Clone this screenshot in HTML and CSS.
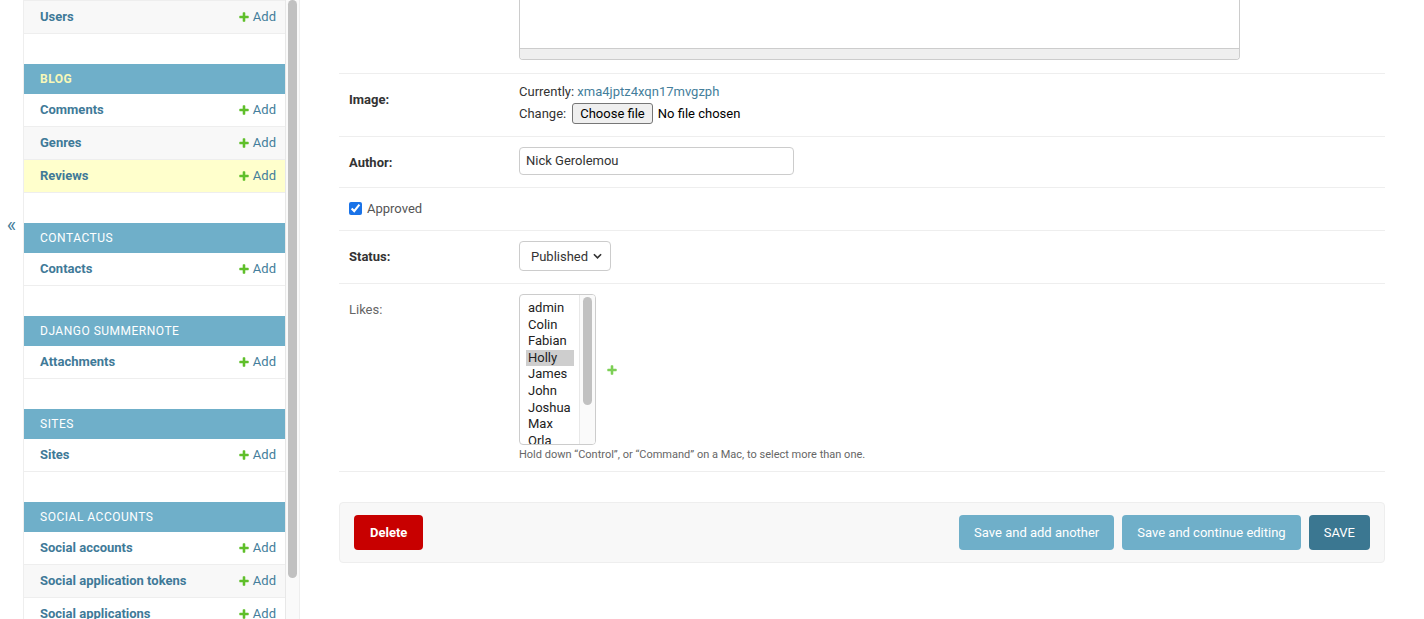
FILE: index.html
```html
<!DOCTYPE html>
<html lang="en">
<head>
<meta charset="utf-8">
<title>Change review | Django site admin</title>
<link rel="stylesheet" href="styles.css">
</head>
<body>
<div class="page">
  <div class="toggle-col"><button class="toggle" type="button" aria-label="Toggle navigation">&laquo;</button></div>

  <nav class="sidebar">
    <div class="sidebar-content">
      <div class="module">
        <div class="row row-alt row-first"><a class="model" href="#">Users</a><a class="add" href="#"><svg class="plus" viewBox="0 0 1792 1792"><path d="M1600 796v192q0 40-28 68t-68 28h-416v416q0 40-28 68t-68 28h-192q-40 0-68-28t-28-68v-416h-416q-40 0-68-28t-28-68v-192q0-40 28-68t68-28h416v-416q0-40 28-68t68-28h192q40 0 68 28t28 68v416h416q40 0 68 28t28 68z"/></svg>Add</a></div>
      </div>

      <div class="module">
        <div class="caption current">Blog</div>
        <div class="row"><a class="model" href="#">Comments</a><a class="add" href="#"><svg class="plus" viewBox="0 0 1792 1792"><path d="M1600 796v192q0 40-28 68t-68 28h-416v416q0 40-28 68t-68 28h-192q-40 0-68-28t-28-68v-416h-416q-40 0-68-28t-28-68v-192q0-40 28-68t68-28h416v-416q0-40 28-68t68-28h192q40 0 68 28t28 68v416h416q40 0 68 28t28 68z"/></svg>Add</a></div>
        <div class="row row-alt"><a class="model" href="#">Genres</a><a class="add" href="#"><svg class="plus" viewBox="0 0 1792 1792"><path d="M1600 796v192q0 40-28 68t-68 28h-416v416q0 40-28 68t-68 28h-192q-40 0-68-28t-28-68v-416h-416q-40 0-68-28t-28-68v-192q0-40 28-68t68-28h416v-416q0-40 28-68t68-28h192q40 0 68 28t28 68v416h416q40 0 68 28t28 68z"/></svg>Add</a></div>
        <div class="row row-selected"><a class="model" href="#">Reviews</a><a class="add" href="#"><svg class="plus" viewBox="0 0 1792 1792"><path d="M1600 796v192q0 40-28 68t-68 28h-416v416q0 40-28 68t-68 28h-192q-40 0-68-28t-28-68v-416h-416q-40 0-68-28t-28-68v-192q0-40 28-68t68-28h416v-416q0-40 28-68t68-28h192q40 0 68 28t28 68v416h416q40 0 68 28t28 68z"/></svg>Add</a></div>
      </div>

      <div class="module">
        <div class="caption">Contactus</div>
        <div class="row"><a class="model" href="#">Contacts</a><a class="add" href="#"><svg class="plus" viewBox="0 0 1792 1792"><path d="M1600 796v192q0 40-28 68t-68 28h-416v416q0 40-28 68t-68 28h-192q-40 0-68-28t-28-68v-416h-416q-40 0-68-28t-28-68v-192q0-40 28-68t68-28h416v-416q0-40 28-68t68-28h192q40 0 68 28t28 68v416h416q40 0 68 28t28 68z"/></svg>Add</a></div>
      </div>

      <div class="module">
        <div class="caption">Django Summernote</div>
        <div class="row"><a class="model" href="#">Attachments</a><a class="add" href="#"><svg class="plus" viewBox="0 0 1792 1792"><path d="M1600 796v192q0 40-28 68t-68 28h-416v416q0 40-28 68t-68 28h-192q-40 0-68-28t-28-68v-416h-416q-40 0-68-28t-28-68v-192q0-40 28-68t68-28h416v-416q0-40 28-68t68-28h192q40 0 68 28t28 68v416h416q40 0 68 28t28 68z"/></svg>Add</a></div>
      </div>

      <div class="module">
        <div class="caption">Sites</div>
        <div class="row"><a class="model" href="#">Sites</a><a class="add" href="#"><svg class="plus" viewBox="0 0 1792 1792"><path d="M1600 796v192q0 40-28 68t-68 28h-416v416q0 40-28 68t-68 28h-192q-40 0-68-28t-28-68v-416h-416q-40 0-68-28t-28-68v-192q0-40 28-68t68-28h416v-416q0-40 28-68t68-28h192q40 0 68 28t28 68v416h416q40 0 68 28t28 68z"/></svg>Add</a></div>
      </div>

      <div class="module">
        <div class="caption">Social Accounts</div>
        <div class="row"><a class="model" href="#">Social accounts</a><a class="add" href="#"><svg class="plus" viewBox="0 0 1792 1792"><path d="M1600 796v192q0 40-28 68t-68 28h-416v416q0 40-28 68t-68 28h-192q-40 0-68-28t-28-68v-416h-416q-40 0-68-28t-28-68v-192q0-40 28-68t68-28h416v-416q0-40 28-68t68-28h192q40 0 68 28t28 68v416h416q40 0 68 28t28 68z"/></svg>Add</a></div>
        <div class="row row-alt"><a class="model" href="#">Social application tokens</a><a class="add" href="#"><svg class="plus" viewBox="0 0 1792 1792"><path d="M1600 796v192q0 40-28 68t-68 28h-416v416q0 40-28 68t-68 28h-192q-40 0-68-28t-28-68v-416h-416q-40 0-68-28t-28-68v-192q0-40 28-68t68-28h416v-416q0-40 28-68t68-28h192q40 0 68 28t28 68v416h416q40 0 68 28t28 68z"/></svg>Add</a></div>
        <div class="row"><a class="model" href="#">Social applications</a><a class="add" href="#"><svg class="plus" viewBox="0 0 1792 1792"><path d="M1600 796v192q0 40-28 68t-68 28h-416v416q0 40-28 68t-68 28h-192q-40 0-68-28t-28-68v-416h-416q-40 0-68-28t-28-68v-192q0-40 28-68t68-28h416v-416q0-40 28-68t68-28h192q40 0 68 28t28 68v416h416q40 0 68 28t28 68z"/></svg>Add</a></div>
      </div>
    </div>
    <div class="scroll-track"><div class="scroll-thumb"></div></div>
  </nav>

  <main class="main">
    <div class="fieldset">
      <div class="form-row row-editor">
        <div class="label"></div>
        <div class="editor-tail"><div class="editor-status"></div></div>
      </div>

      <div class="form-row">
        <div class="label required label-image">Image:</div>
        <div class="file-upload">
          <div class="file-line">Currently: <a class="link" href="#">xma4jptz4xqn17mvgzph</a></div>
          <div class="file-line file-change">Change: <span class="file-btn">Choose file</span><span class="file-none">No file chosen</span></div>
        </div>
      </div>

      <div class="form-row">
        <div class="label required">Author:</div>
        <div class="text-input">Nick Gerolemou</div>
      </div>

      <div class="form-row">
        <div class="checkbox-line"><input class="checkbox" type="checkbox" id="approved" checked><label class="checkbox-label" for="approved">Approved</label></div>
      </div>

      <div class="form-row">
        <div class="label required">Status:</div>
        <div class="select-box">Published<svg class="chevron" viewBox="0 0 10 6"><path d="M1 1l4 4 4-4"/></svg></div>
      </div>

      <div class="form-row row-likes">
        <div class="label">Likes:</div>
        <div class="field-col">
          <div class="related-wrapper">
            <div class="listbox">
              <div class="options">
                <div class="option">admin</div>
                <div class="option">Colin</div>
                <div class="option">Fabian</div>
                <div class="option option-selected">Holly</div>
                <div class="option">James</div>
                <div class="option">John</div>
                <div class="option">Joshua</div>
                <div class="option">Max</div>
                <div class="option">Orla</div>
              </div>
              <div class="list-track"><div class="list-thumb"></div></div>
            </div>
            <a class="related-add" href="#"><svg class="plus plus-light" viewBox="0 0 1792 1792"><path d="M1600 796v192q0 40-28 68t-68 28h-416v416q0 40-28 68t-68 28h-192q-40 0-68-28t-28-68v-416h-416q-40 0-68-28t-28-68v-192q0-40 28-68t68-28h416v-416q0-40 28-68t68-28h192q40 0 68 28t28 68v416h416q40 0 68 28t28 68z"/></svg></a>
          </div>
          <div class="help">Hold down “Control”, or “Command” on a Mac, to select more than one.</div>
        </div>
      </div>
    </div>

    <div class="submit-row">
      <a class="btn btn-delete" href="#">Delete</a>
      <div class="save-group">
        <button class="btn btn-primary" type="button">Save and add another</button>
        <button class="btn btn-primary" type="button">Save and continue editing</button>
        <button class="btn btn-default" type="button">SAVE</button>
      </div>
    </div>
  </main>
</div>
</body>
</html>
```

FILE: styles.css
```css
* { box-sizing: border-box; }

html, body {
  margin: 0;
  padding: 0;
  height: 100%;
  background: #fff;
  font-family: "Roboto", "Liberation Sans", Arial, sans-serif;
  color: #333;
  font-size: 13px;
}

a { text-decoration: none; }

.page {
  display: flex;
  height: 100vh;
  overflow: hidden;
}

/* toggle */
.toggle-col {
  flex: 0 0 24px;
  width: 24px;
  border-right: 1px solid #eee;
}

.toggle {
  display: block;
  width: 23px;
  margin: 0;
  padding: 213px 0 0;
  border: 0;
  background: transparent;
  color: #447e9b;
  font-family: "Roboto", "Liberation Sans", sans-serif;
  font-size: 20px;
  line-height: 24px;
  text-align: center;
  cursor: pointer;
}

/* sidebar */
.sidebar {
  flex: 0 0 276px;
  width: 276px;
  height: 100vh;
  display: flex;
  overflow: hidden;
  border-right: 1px solid #eee;
}

.sidebar-content {
  flex: 0 0 261px;
  width: 261px;
  overflow: hidden;
}

.scroll-track {
  flex: 0 0 14px;
  width: 14px;
  height: 100%;
  background: #fafafa;
  border-left: 1px solid #e8e8e8;
  padding: 0 2px 0 2px;
}

.scroll-thumb {
  height: 578px;
  background: #c1c1c1;
  border-radius: 5px;
}

.module { margin-bottom: 30px; }

.caption {
  background: #6fafc9;
  color: #fff;
  font-size: 12px;
  line-height: 14px;
  letter-spacing: 0.5px;
  text-transform: uppercase;
  padding: 8px 16px;
}

.caption.current {
  color: #f8f8b8;
  font-weight: 700;
}

.row {
  display: flex;
  justify-content: space-between;
  align-items: center;
  padding: 8px 9px 8px 16px;
  line-height: 16px;
  border-bottom: 1px solid #eee;
  background: #fff;
  white-space: nowrap;
}

.row-first { border-top: 1px solid #eee; }
.row-alt { background: #f8f8f8; }
.row-selected { background: #ffffcc; }

.model {
  color: #3f7a98;
  font-weight: 700;
  font-size: 13px;
}

.add {
  display: inline-flex;
  align-items: center;
  gap: 3px;
  color: #447e9b;
  font-size: 13px;
}

.plus {
  width: 12px;
  height: 12px;
  fill: #5fbf2a;
}

.plus-light { fill: #7ccf55; }

/* main */
.main {
  flex: 1 1 auto;
  padding: 0 39px;
  min-width: 0;
}

.form-row {
  display: flex;
  align-items: flex-start;
  padding: 10px 10px 12px;
  border-bottom: 1px solid #eee;
}

.row-editor { padding-top: 0; padding-bottom: 13px; }
.row-likes { padding-bottom: 10px; }

.label {
  flex: 0 0 170px;
  width: 170px;
  padding: 8px 10px 0 0;
  line-height: 16px;
  color: #666;
  font-size: 13px;
}

.label.required {
  color: #333;
  font-weight: 700;
}

.editor-tail {
  width: 721px;
  height: 60px;
  border: 1px solid #ccc;
  border-top: 0;
  border-radius: 0 0 4px 4px;
  display: flex;
  flex-direction: column;
  justify-content: flex-end;
}

.editor-status {
  height: 11px;
  border-top: 1px solid #ccc;
  background: #efefef;
  border-radius: 0 0 3px 3px;
}

.file-upload { line-height: 16px; }

.file-line { color: #333; }

.link { color: #447e9b; }

.file-change {
  display: flex;
  align-items: center;
  margin-top: 3px;
  height: 21px;
}

.file-btn {
  display: inline-block;
  height: 21px;
  line-height: 19px;
  margin-left: 6px;
  padding: 0 7px;
  border: 1px solid #767676;
  border-radius: 3px;
  background: #efefef;
  color: #000;
  font-size: 13px;
}

.file-none {
  margin-left: 5px;
  color: #000;
}

.text-input {
  width: 275px;
  height: 28px;
  padding: 0 6px;
  line-height: 26px;
  border: 1px solid #ccc;
  border-radius: 4px;
  color: #333;
  font-size: 13px;
}

.checkbox-line {
  display: flex;
  align-items: center;
  height: 20px;
}

.checkbox {
  width: 13px;
  height: 13px;
  margin: 0;
  accent-color: #1a73e8;
}

.checkbox-label {
  margin-left: 5px;
  color: #555;
  font-size: 13px;
}

.select-box {
  display: flex;
  align-items: center;
  justify-content: space-between;
  width: 92px;
  height: 30px;
  padding: 0 8px 0 11px;
  border: 1px solid #ccc;
  border-radius: 4px;
  color: #333;
  font-size: 13px;
}

.chevron {
  width: 9px;
  height: 6px;
  fill: none;
  stroke: #333;
  stroke-width: 1.8;
}

.field-col { display: flex; flex-direction: column; }

.related-wrapper {
  display: flex;
  align-items: center;
}

.listbox {
  display: flex;
  width: 77px;
  height: 151px;
  border: 1px solid #ccc;
  border-radius: 4px;
  overflow: hidden;
  font-size: 13px;
  color: #222;
}

.options {
  flex: 1 1 auto;
  padding: 5px 5px 0 6px;
  overflow: hidden;
}

.list-track {
  flex: 0 0 16px;
  width: 16px;
  height: 100%;
  background: #fafafa;
  border-left: 1px solid #e8e8e8;
  padding: 2px 3px 0 3px;
}

.list-thumb {
  height: 108px;
  background: #c1c1c1;
  border-radius: 5px;
}

.option {
  line-height: 16.6px;
  padding: 0 2px;
  white-space: nowrap;
}

.option-selected { background: #cecece; }

.related-add {
  display: inline-flex;
  margin-left: 10px;
}

.help {
  margin-top: 3px;
  font-size: 11px;
  line-height: 13px;
  color: #666;
}

.submit-row {
  display: flex;
  align-items: center;
  margin-top: 30px;
  padding: 12px 14px;
  background: #f8f8f8;
  border: 1px solid #eee;
  border-radius: 4px;
}

.save-group {
  display: flex;
  gap: 8px;
  margin-left: auto;
}

.btn {
  display: inline-block;
  height: 35px;
  padding: 0 15px;
  line-height: 35px;
  border: 0;
  border-radius: 4px;
  color: #fff;
  font-family: "Roboto", "Liberation Sans", sans-serif;
  font-size: 13px;
  cursor: pointer;
}

.btn-delete {
  background: #c80000;
  font-weight: 700;
  padding: 0 16px;
}

.btn-primary { background: #6fafc9; }
.btn-default { background: #3b7791; }
```
